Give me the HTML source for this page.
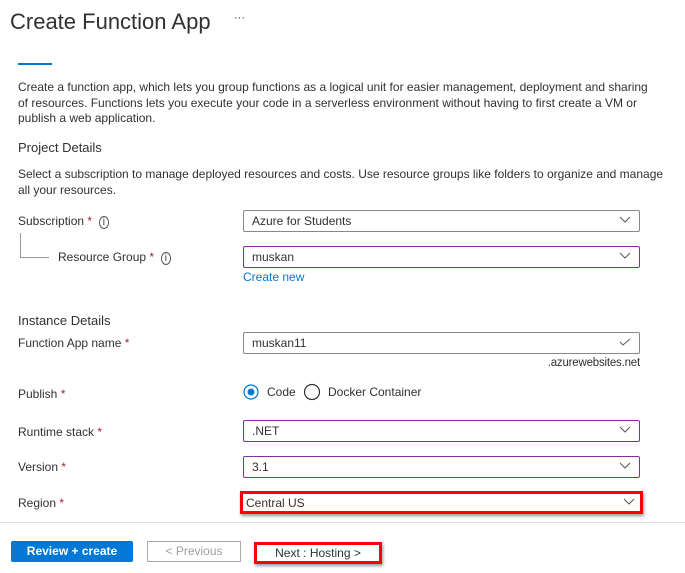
<!DOCTYPE html>
<html><head><style>
body{margin:0;width:685px;height:573px;background:#fff;font-family:"Liberation Sans",sans-serif;color:#323130;position:relative;overflow:hidden}
.a{position:absolute;white-space:nowrap;font-size:12px}
.box{position:absolute;left:243px;width:395px;height:20px;border:1px solid #8a8886;border-radius:2px;box-sizing:content-box}
.box span{position:absolute;left:8px;top:3px;font-size:12px}
.pur{border-color:#8a2da5}
.chev{position:absolute;right:8px;top:5px}
.st{color:#a4262c}
</style></head><body>
<div class="a" style="left:10px;top:9px;font-size:22px;color:#323130">Create Function App</div>
<div class="a" style="left:234px;top:12px;font-size:11px">···</div>
<div style="position:absolute;left:18px;top:63px;width:34px;height:2px;background:#0078d4"></div>
<div class="a" style="left:18px;top:80px;line-height:15.5px">Create a function app, which lets you group functions as a logical unit for easier management, deployment and sharing<br>of resources. Functions lets you execute your code in a serverless environment without having to first create a VM or<br>publish a web application.</div>
<div class="a" style="left:18px;top:140px;font-size:13px">Project Details</div>
<div class="a" style="left:18px;top:166px;line-height:16px">Select a subscription to manage deployed resources and costs. Use resource groups like folders to organize and manage<br>all your resources.</div>
<div class="a" style="left:18px;top:214px">Subscription <span class="st">*</span> &nbsp;<span style="font-size:10px;border:1px solid #555;border-radius:50%;padding:0 3px">i</span></div>
<div style="position:absolute;left:20px;top:233px;width:28px;height:24px;border-left:1px solid #999;border-bottom:1px solid #999"></div>
<div class="a" style="left:58px;top:250px">Resource Group <span class="st">*</span> &nbsp;<span style="font-size:10px;border:1px solid #555;border-radius:50%;padding:0 3px">i</span></div>
<div class="box" style="top:210px"><span>Azure for Students</span><svg class="chev" width="12" height="8"><path d="M1 1l5 5 5-5" stroke="#555" fill="none"/></svg></div>
<div class="box pur" style="top:246px"><span>muskan</span><svg class="chev" width="12" height="8"><path d="M1 1l5 5 5-5" stroke="#555" fill="none"/></svg></div>
<div class="a" style="left:243px;top:270px;color:#0078d4">Create new</div>
<div class="a" style="left:18px;top:313px;font-size:13px">Instance Details</div>
<div class="a" style="left:18px;top:336px">Function App name <span class="st">*</span></div>
<div class="box" style="top:332px"><span>muskan11</span><svg class="chev" width="12" height="9"><path d="M1 4l3 3 7-6" stroke="#555" fill="none"/></svg></div>
<div class="a" style="left:540px;top:357px;width:100px;text-align:right;font-size:11.5px;letter-spacing:-0.2px">.azurewebsites.net</div>
<div class="a" style="left:18px;top:387px">Publish <span class="st">*</span></div>
<svg style="position:absolute;left:243px;top:383px" width="200" height="18"><circle cx="8" cy="9" r="7" fill="none" stroke="#0078d4" stroke-width="1.2"/><circle cx="8" cy="9" r="3.5" fill="#0078d4"/><circle cx="69" cy="9" r="7.5" fill="none" stroke="#323130" stroke-width="1.2"/></svg>
<div class="a" style="left:267px;top:385px">Code</div>
<div class="a" style="left:328px;top:385px">Docker Container</div>
<div class="a" style="left:18px;top:425px">Runtime stack <span class="st">*</span></div>
<div class="box pur" style="top:420px"><span>.NET</span><svg class="chev" width="12" height="8"><path d="M1 1l5 5 5-5" stroke="#555" fill="none"/></svg></div>
<div class="a" style="left:18px;top:460px">Version <span class="st">*</span></div>
<div class="box pur" style="top:456px"><span>3.1</span><svg class="chev" width="12" height="8"><path d="M1 1l5 5 5-5" stroke="#555" fill="none"/></svg></div>
<div class="a" style="left:18px;top:496px">Region <span class="st">*</span></div>
<div style="position:absolute;left:240px;top:491px;width:397px;height:17px;border:3px solid #f00;box-shadow:1px 2px 3px #999"><span class="a" style="left:3px;top:2px">Central US</span><svg style="position:absolute;right:5px;top:4px" width="12" height="8"><path d="M1 1l5 5 5-5" stroke="#555" fill="none"/></svg></div>
<div style="position:absolute;left:0;top:522px;width:685px;height:1px;background:#ddd"></div>
<div style="position:absolute;left:11px;top:541px;width:122px;height:21px;background:#0078d4;border-radius:2px;color:#fff;font-size:12px;font-weight:bold;text-align:center;line-height:21px">Review + create</div>
<div style="position:absolute;left:147px;top:541px;width:92px;height:19px;border:1px solid #aaa;color:#a19f9d;font-size:12px;text-align:center;line-height:19px">&lt; Previous</div>
<div style="position:absolute;left:254px;top:542px;width:122px;height:16px;border:3px solid #f00;box-shadow:1px 2px 3px #999;font-size:12px;text-align:center;line-height:16px">Next : Hosting &gt;</div>
</body></html>
